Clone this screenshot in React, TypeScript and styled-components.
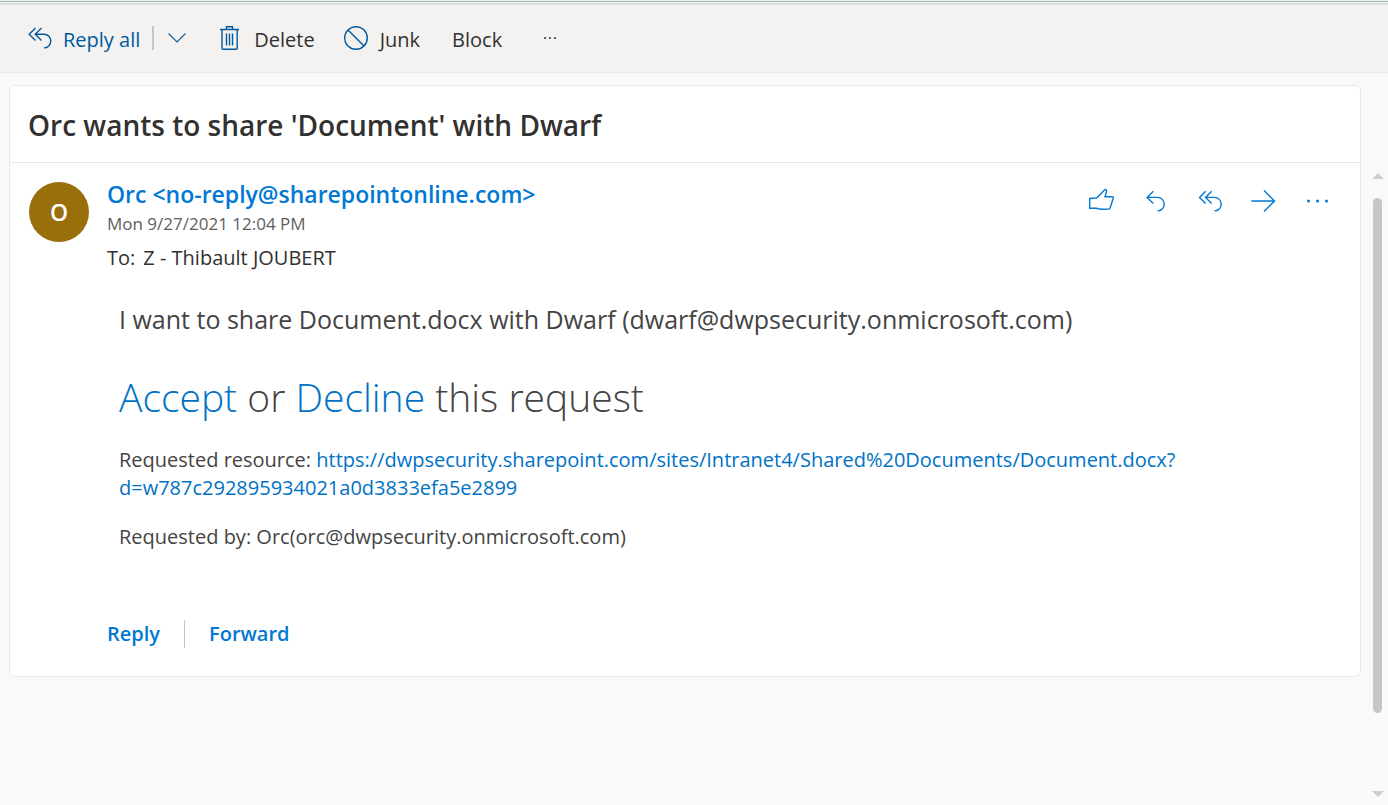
import React from "react";
import styled, { createGlobalStyle } from "styled-components";

const GlobalStyle = createGlobalStyle`
  * { box-sizing: border-box; }
  body {
    margin: 0;
    background: #faf9f8;
    color: #323130;
    font-family: "Segoe UI", "Open Sans", "Noto Sans", sans-serif;
  }
  h1, h2, p { margin: 0; }
`;

const Shell = styled.div`
  display: flex;
  flex-direction: column;
  min-height: 100vh;
`;

const TopEdge = styled.div`
  height: 5px;
  border-top: 1px solid #eef1f1;
  border-bottom: 2px solid #dadedf;
  background: linear-gradient(#a6b1b4 1px, #f1f3f3 1px);
`;

const Toolbar = styled.nav`
  display: flex;
  align-items: center;
  height: 68px;
  padding: 2px 28px 0;
  background: #f3f2f1;
  border-bottom: 1px solid #e9e8e7;
`;

const ToolButton = styled.button<{ $tone?: string; $gap?: number; $after?: number }>`
  display: flex;
  align-items: flex-start;
  gap: ${(p) => p.$gap ?? 12}px;
  margin: 0 ${(p) => p.$after ?? 30}px 0 0;
  padding: 0;
  border: 0;
  background: none;
  color: ${(p) => p.$tone ?? "#323130"};
  font: inherit;
  font-size: 20px;
  line-height: 28px;
  min-height: 28px;
  white-space: nowrap;
  cursor: pointer;
`;

const ToolDivider = styled.span`
  width: 2px;
  height: 24px;
  margin: 0 14px 4px 0;
  background: #c8c6c4;
`;

const Icon = styled.svg<{ $color: string; $w?: number }>`
  display: block;
  flex: none;
  fill: none;
  stroke: ${(p) => p.$color};
  stroke-width: ${(p) => p.$w ?? 1.4};
`;

const Content = styled.div`
  display: flex;
  flex: 1;
  padding-left: 9px;
`;

const Reading = styled.main`
  flex: 1;
  min-width: 0;
  padding-top: 12px;
`;

const Card = styled.article`
  border: 1px solid #eae9e8;
  border-radius: 6px;
  background: #fff;
`;

const SubjectBar = styled.header`
  display: flex;
  align-items: center;
  height: 77px;
  padding: 2px 18px 0;
  border-bottom: 1px solid #eae9e8;
`;

const Subject = styled.h1`
  font-size: 28px;
  line-height: 40px;
  font-weight: 600;
`;

const Message = styled.section`
  display: flex;
  gap: 18px;
  padding: 19px 29px 28px 19px;
`;

const Avatar = styled.div`
  display: flex;
  flex: none;
  align-items: center;
  justify-content: center;
  width: 60px;
  height: 60px;
  border-radius: 50%;
  background: #986f0b;
  color: #fff;
  font-size: 23px;
  font-weight: 600;
`;

const MessageMain = styled.div`
  flex: 1;
  min-width: 0;
`;

const MessageHead = styled.div`
  display: flex;
  justify-content: space-between;
`;

const Sender = styled.h2`
  color: #0078d4;
  font-size: 23px;
  line-height: 24px;
  font-weight: 600;
`;

const Sent = styled.p`
  color: #605e5c;
  font-size: 17px;
  line-height: 36px;
`;

const Recipient = styled.p`
  display: flex;
  gap: 8px;
  font-size: 20px;
  line-height: 32px;
`;

const Actions = styled.div`
  display: flex;
  gap: 26px;
  padding-top: 5px;
`;

const IconButton = styled.button`
  width: 28px;
  height: 28px;
  padding: 0;
  border: 0;
  background: none;
  cursor: pointer;
`;

const Body = styled.div`
  padding: 25px 12px 0;
  color: #444;
`;

const Lead = styled.p`
  font-size: 25px;
  line-height: 40px;
`;

const Decision = styled.p`
  padding: 30px 0 21px;
  font-size: 39px;
  line-height: 56px;
  font-weight: 300;
`;

const Detail = styled.p`
  padding-bottom: 21px;
  font-size: 20px;
  line-height: 28px;
`;

const Link = styled.a`
  color: #0072c6;
  text-decoration: none;
`;

const Footer = styled.footer`
  display: flex;
  align-items: center;
  padding-top: 48px;
`;

const FooterButton = styled.button`
  padding: 0;
  border: 0;
  background: none;
  color: #0078d4;
  font: inherit;
  font-size: 20px;
  line-height: 28px;
  font-weight: 600;
  cursor: pointer;

  & + & {
    margin-left: 24px;
    padding-left: 24px;
    border-left: 1px solid #c8c6c4;
  }
`;

const ScrollTrack = styled.div`
  display: flex;
  flex-direction: column;
  align-items: center;
  width: 27px;
  padding: 100px 0 8px 6px;
`;

const Thumb = styled.div`
  flex: 515;
  width: 9px;
  margin-top: 19px;
  border-radius: 5px;
  background: #c8c6c4;
`;

const TrackRest = styled.div`
  flex: 78;
`;

const Arrow = styled.svg`
  display: block;
  flex: none;
  fill: #c8d0d4;
`;

const NAVY = "#005a9e";
const BLUE = "#0078d4";

export default function App() {
  return (
    <>
      <GlobalStyle />
      <Shell>
        <TopEdge />
        <Toolbar aria-label="Message commands">
          <ToolButton $tone={NAVY} $gap={11} $after={12}>
            <Icon $color={NAVY} width="24" height="24" viewBox="0 0 24 24">
              <path d="M7.5 2 1.2 8.3l6.3 6.3M13.5 2 7.2 8.3l6.3 6.3M7.2 8.3H16a6.8 6.8 0 0 1 0 13.6" />
            </Icon>
            Reply all
          </ToolButton>
          <ToolDivider />
          <ToolButton $after={32} aria-label="More reply options">
            <Icon $color={NAVY} $w={1.1} width="18" height="24" viewBox="0 0 18 24">
              <path d="m.5 7.5 8.500 8.500 8.500-8.500" />
            </Icon>
          </ToolButton>
          <ToolButton $after={29}>
            <Icon $color={NAVY} width="24" height="24" viewBox="0 0 24 24">
              <path d="M2 3.5h19M8.5 3.5v-2.8h6v2.8M4 3.5v18.7q0 1 1 1h13.2q1 0 1-1V3.5M8.5 7.5v12M11.5 7.5v12M14.5 7.5v12" />
            </Icon>
            Delete
          </ToolButton>
          <ToolButton $after={32}>
            <Icon $color={NAVY} width="24" height="24" viewBox="0 0 24 24">
              <circle cx="12" cy="12" r="11.3" />
              <path d="m4 4 16 16" />
            </Icon>
            Junk
          </ToolButton>
          <ToolButton $after={42}>Block</ToolButton>
          <ToolButton aria-label="More commands">
            <Icon $color="none" width="12" height="24" viewBox="0 0 12 24">
              <path fill="#605e5c" d="M0 11h2v2H0zM5 11h2v2H5zM10 11h2v2h-2z" />
            </Icon>
          </ToolButton>
        </Toolbar>
        <Content>
          <Reading>
            <Card>
              <SubjectBar>
                <Subject>Orc wants to share 'Document' with Dwarf</Subject>
              </SubjectBar>
              <Message>
                <Avatar>O</Avatar>
                <MessageMain>
                  <MessageHead>
                    <div>
                      <Sender>Orc &lt;no-reply@sharepointonline.com&gt;</Sender>
                      <Sent>Mon 9/27/2021 12:04 PM</Sent>
                      <Recipient>
                        <span>To:</span>
                        <span>Z - Thibault JOUBERT</span>
                      </Recipient>
                    </div>
                    <Actions>
                      <IconButton aria-label="Like">
                        <Icon $color={BLUE} width="28" height="28" viewBox="0 0 28 28">
                          <path d="M2.7 11.5 9.7 11 17.5 3q.8-.8 1.6-.1.8.7.4 1.8L18 9.8h7.2q1.3.2 1 1.4l-3 9.6q-.3 1.2-1.4 1.3l-6.8.2q-1.5 0-2.8-.5-1.6-.6-3.2-.6H2.7z" />
                        </Icon>
                      </IconButton>
                      <IconButton aria-label="Reply">
                        <Icon $color={BLUE} width="28" height="28" viewBox="0 0 28 28">
                          <path d="m12.3 4.2-6.2 6.2 6.2 6.2M6.1 10.4h10.4a6.7 6.7 0 0 1 0 13.5" />
                        </Icon>
                      </IconButton>
                      <IconButton aria-label="Reply all">
                        <Icon $color={BLUE} width="28" height="28" viewBox="0 0 28 28">
                          <path d="m10.7 4.2-6.2 6.2 6.2 6.2M16.7 4.2l-6.2 6.2 6.2 6.2M10.5 10.4h9a6.7 6.7 0 0 1 0 13.5" />
                        </Icon>
                      </IconButton>
                      <IconButton aria-label="Forward">
                        <Icon $color={BLUE} width="28" height="28" viewBox="0 0 28 28">
                          <path d="M2.3 14h23M15 3.5 25.5 14 15 24.5" />
                        </Icon>
                      </IconButton>
                      <IconButton aria-label="More actions">
                        <Icon $color="none" width="28" height="28" viewBox="0 0 28 28">
                          <g fill={BLUE}>
                            <circle cx="5.5" cy="14" r="1.5" />
                            <circle cx="14.5" cy="14" r="1.5" />
                            <circle cx="23.5" cy="14" r="1.5" />
                          </g>
                        </Icon>
                      </IconButton>
                    </Actions>
                  </MessageHead>
                  <Body>
                    <Lead>I want to share Document.docx with Dwarf (dwarf@dwpsecurity.onmicrosoft.com)</Lead>
                    <Decision>
                      <Link href="#accept">Accept</Link> or <Link href="#decline">Decline</Link> this request
                    </Decision>
                    <Detail>
                      Requested resource:{" "}
                      <Link href="#document">
                        https://dwpsecurity.sharepoint.com/sites/Intranet4/Shared%20Documents/Document.docx?
                        <wbr />
                        d=w787c292895934021a0d3833efa5e2899
                      </Link>
                    </Detail>
                    <Detail>Requested by: Orc(orc@dwpsecurity.onmicrosoft.com)</Detail>
                  </Body>
                  <Footer>
                    <FooterButton>Reply</FooterButton>
                    <FooterButton>Forward</FooterButton>
                  </Footer>
                </MessageMain>
              </Message>
            </Card>
          </Reading>
          <ScrollTrack aria-hidden="true">
            <Arrow width="12" height="6" viewBox="0 0 12 6">
              <path d="M0 6 6 0l6 6z" />
            </Arrow>
            <Thumb />
            <TrackRest />
            <Arrow width="12" height="6" viewBox="0 0 12 6">
              <path d="M0 0h12L6 6z" />
            </Arrow>
          </ScrollTrack>
        </Content>
      </Shell>
    </>
  );
}
